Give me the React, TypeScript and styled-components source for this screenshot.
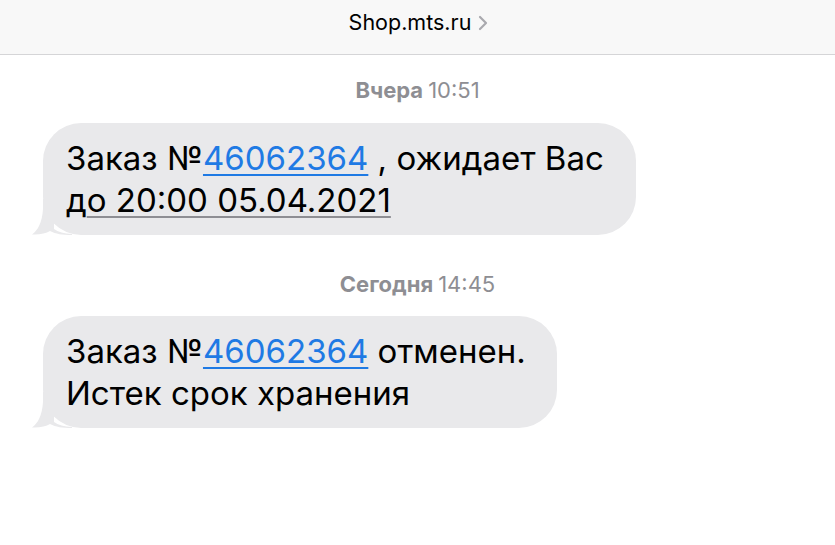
import React from "react";
import styled, { createGlobalStyle } from "styled-components";

const Global = createGlobalStyle`
  html, body { margin: 0; padding: 0; background: #ffffff; }
  body { font-family: Inter, "Noto Sans", sans-serif; -webkit-font-smoothing: antialiased; }
`;

const Page = styled.div`
  width: 835px;
  height: 545px;
  overflow: hidden;
  background: #fff;
  display: flex;
  flex-direction: column;
`;

const Header = styled.header`
  height: 55px;
  background: #f8f8f8;
  border-bottom: 1.5px solid #d5d5d7;
  display: flex;
  align-items: center;
  justify-content: center;
  gap: 7px;
  padding-left: 2px;
  box-sizing: border-box;
`;

const Title = styled.span`
  font-size: 21.5px;
  color: #000;
  margin-top: -10px;
`;

const Chevron = styled.svg`
  width: 10px;
  height: 16px;
  margin-top: -9px;
`;

const Thread = styled.main`
  display: flex;
  flex-direction: column;
  padding: 0 0 0 43px;
`;

const Stamp = styled.div<{ $top: number }>`
  margin-top: ${(p) => p.$top}px;
  align-self: center;
  margin-left: -43px;
  font-size: 22px;
  color: #8e8e93;
  line-height: 22px;
  height: 22px;
`;

const Day = styled.b`
  font-weight: 650;
  margin-right: 5px;
`;

const Bubble = styled.div<{ $top: number; $width: number }>`
  position: relative;
  margin-top: ${(p) => p.$top}px;
  width: ${(p) => p.$width}px;
  box-sizing: border-box;
  background: #e9e9eb;
  border-radius: 38px;
  padding: 14px 20px 14px 23px;
  font-size: 33px;
  line-height: 42px;
  color: #000;
  white-space: nowrap;
`;

const Tail = styled.svg`
  position: absolute;
  left: -11px;
  bottom: 0;
  width: 40px;
  height: 36px;
`;

const Link = styled.span`
  color: #1f7ae4;
  text-decoration: underline;
  text-decoration-color: #1f7ae4;
  text-decoration-thickness: 1.5px;
  text-underline-offset: 4px;
`;

const DateLink = styled.span`
  text-decoration: underline;
  text-decoration-color: #8e8e93;
  text-decoration-thickness: 1.5px;
  text-underline-offset: 4px;
`;

const BubbleTail = () => (
  <Tail viewBox="0 0 40 36">
    <path
      d="M11 0 L22 0 L22 30 C26 33 32 34.5 40 35 L40 36 C30 36 24 35 18 32 C14 34.5 7 36 0 35.5 C6 31 10 24 11 10 Z"
      fill="#e9e9eb"
    />
  </Tail>
);

export default function App() {
  return (
    <>
      <Global />
      <Page>
        <Header>
          <Title>Shop.mts.ru</Title>
          <Chevron viewBox="0 0 10 16">
            <path d="M2 2 L8 8 L2 14" fill="none" stroke="#a9a9ae" strokeWidth="2.2" strokeLinecap="round" strokeLinejoin="round" />
          </Chevron>
        </Header>
        <Thread>
          <Stamp $top={24}>
            <Day>Вчера</Day>10:51
          </Stamp>
          <Bubble $top={22} $width={593}>
            <BubbleTail />
            Заказ №<Link>46062364</Link> , ожидает Вас
            <br />
            д<DateLink>о 20:00 05.04.2021</DateLink>
          </Bubble>
          <Stamp $top={38}>
            <Day>Сегодня</Day>14:45
          </Stamp>
          <Bubble $top={21} $width={514}>
            <BubbleTail />
            Заказ №<Link>46062364</Link> отменен.
            <br />
            Истек срок хранения
          </Bubble>
        </Thread>
      </Page>
    </>
  );
}
